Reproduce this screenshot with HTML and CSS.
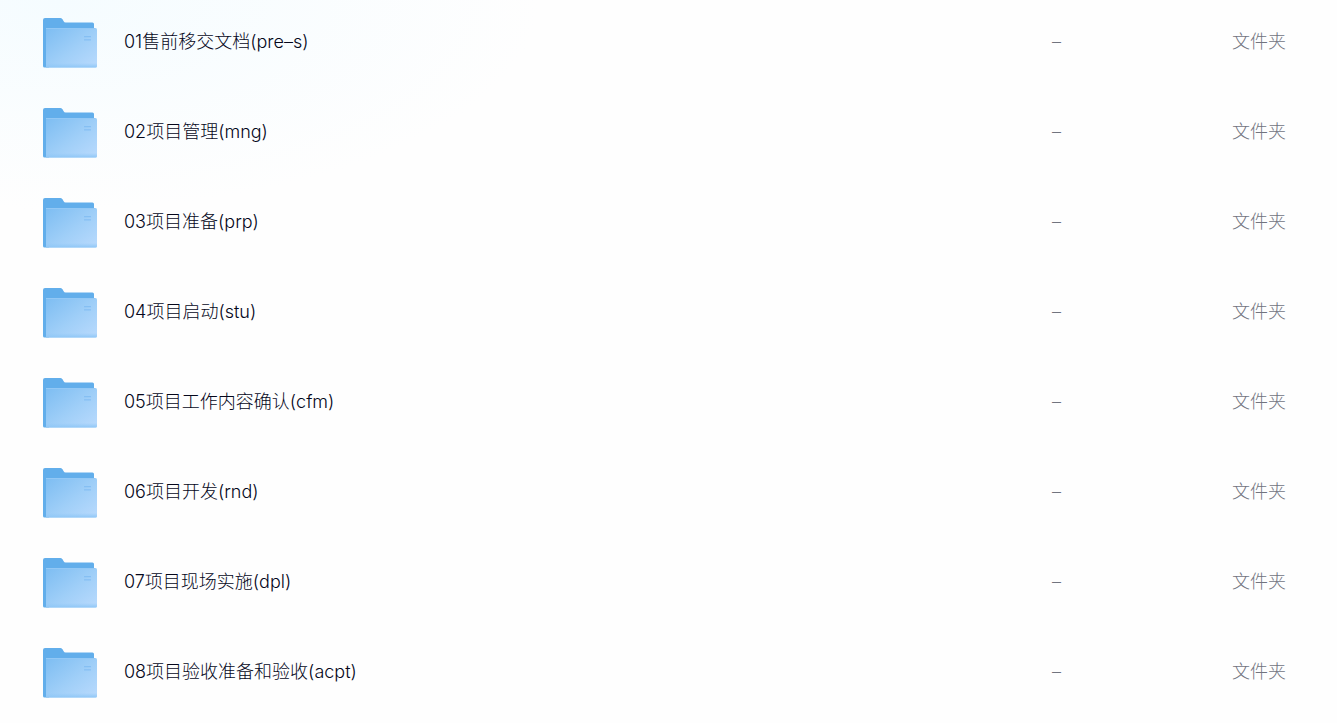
FILE: index.html
```html
<!DOCTYPE html>
<html lang="zh-CN">
<head>
    <meta charset="UTF-8">
    <title>文件列表</title>
    <link rel="stylesheet" href="styles.css">
</head>
<body>
    <!-- shared folder icon -->
    <svg class="icon-defs" aria-hidden="true">
        <defs>
            <linearGradient id="folder-front" x1="0" y1="0" x2="1" y2="1">
                <stop offset="0" stop-color="#7dbdf2"/>
                <stop offset="0.55" stop-color="#a0cff8"/>
                <stop offset="1" stop-color="#b9dafd"/>
            </linearGradient>
            <linearGradient id="folder-edge" x1="0" y1="0" x2="0" y2="1">
                <stop offset="0" stop-color="#8fc7f6" stop-opacity="0"/>
                <stop offset="1" stop-color="#8fc7f6"/>
            </linearGradient>
            <symbol id="folder" viewBox="0 0 54 50">
                <path fill="#62aeeb" d="M2 0h15.500q1.500 0 2.200 1.500l.8 1.500q.7 1.500 2.200 1.500H49.500q1.500 0 1.500 1.500V45H6v4.500H1.500Q0 49.500 0 48V2Q0 0 2 0z"/>
                <path fill="url(#folder-front)" d="M3 10h49.500q1.500 0 1.500 1.500v36.500q0 1.500-1.500 1.500H3z"/>
                <path fill="url(#folder-edge)" d="M3 45h51v3q0 1.500-1.500 1.500H3z"/>
                <path fill="#93c8f5" d="M3 10h49v1H3z"/>
                <path fill="#85bff3" d="M41 18h7v1.200h-7zM41 21.300h7v1.200h-7z"/>
            </symbol>
        </defs>
    </svg>

    <table class="file-list">
        <tbody>
            <tr>
                <td class="name"><div class="file"><svg class="icon"><use href="#folder"/></svg><span>01售前移交文档(pre–s)</span></div></td>
                <td class="size">–</td>
                <td class="type">文件夹</td>
            </tr>
            <tr>
                <td class="name"><div class="file"><svg class="icon"><use href="#folder"/></svg><span>02项目管理(mng)</span></div></td>
                <td class="size">–</td>
                <td class="type">文件夹</td>
            </tr>
            <tr>
                <td class="name"><div class="file"><svg class="icon"><use href="#folder"/></svg><span>03项目准备(prp)</span></div></td>
                <td class="size">–</td>
                <td class="type">文件夹</td>
            </tr>
            <tr>
                <td class="name"><div class="file"><svg class="icon"><use href="#folder"/></svg><span>04项目启动(stu)</span></div></td>
                <td class="size">–</td>
                <td class="type">文件夹</td>
            </tr>
            <tr>
                <td class="name"><div class="file"><svg class="icon"><use href="#folder"/></svg><span>05项目工作内容确认(cfm)</span></div></td>
                <td class="size">–</td>
                <td class="type">文件夹</td>
            </tr>
            <tr>
                <td class="name"><div class="file"><svg class="icon"><use href="#folder"/></svg><span>06项目开发(rnd)</span></div></td>
                <td class="size">–</td>
                <td class="type">文件夹</td>
            </tr>
            <tr>
                <td class="name"><div class="file"><svg class="icon"><use href="#folder"/></svg><span>07项目现场实施(dpl)</span></div></td>
                <td class="size">–</td>
                <td class="type">文件夹</td>
            </tr>
            <tr>
                <td class="name"><div class="file"><svg class="icon"><use href="#folder"/></svg><span>08项目验收准备和验收(acpt)</span></div></td>
                <td class="size">–</td>
                <td class="type">文件夹</td>
            </tr>
        </tbody>
    </table>
</body>
</html>
```

FILE: styles.css
```css
body {
    margin: 0;
    font-family: Inter, "Noto Sans CJK SC", sans-serif;
    font-size: 18px;
    font-weight: 300;
    line-height: 26px;
    color: #05071b;
    background: #fefefe radial-gradient(ellipse 480px 210px at 60px 0, #f5fcff, #fefefe) no-repeat;
}
.icon-defs {
    display: block;
    width: 0;
    height: 0;
}
.file-list {
    width: 100%;
    margin-top: -3px;
    border-collapse: collapse;
    table-layout: fixed;
}
.file-list td {
    height: 90px;
    padding: 0;
    text-align: left;
    vertical-align: middle;
}
.file-list .name {
    padding-left: 43px;
}
.file-list .size {
    width: 180px;
    color: #71747f;
}
.file-list .type {
    width: 105px;
    color: #71747f;
}
.file {
    display: flex;
    align-items: center;
    gap: 27px;
}
.icon {
    width: 54px;
    height: 50px;
    padding-top: 2px;
    flex: none;
}
```
